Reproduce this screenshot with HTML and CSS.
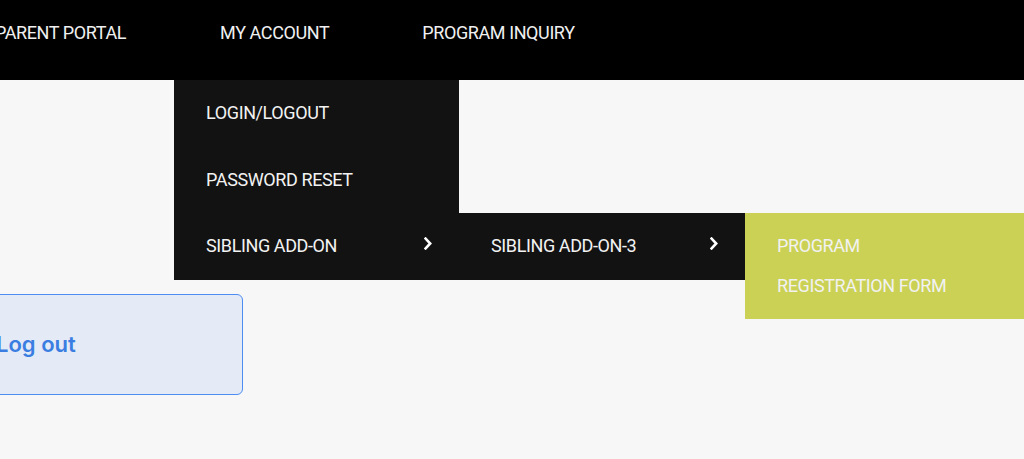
FILE: index.html
```html
<!DOCTYPE html>
<html lang="en">
<head>
<meta charset="utf-8">
<title>Menu</title>
<link rel="stylesheet" href="styles.css">
</head>
<body>
<header class="site-header">
  <nav>
    <ul class="main-nav">
      <li class="nav-item"><a href="#">PARENT PORTAL</a></li>
      <li class="nav-item has-sub">
        <a href="#">MY ACCOUNT</a>
        <ul class="submenu level-1">
          <li class="sub-item"><a href="#">LOGIN/LOGOUT</a></li>
          <li class="sub-item"><a href="#">PASSWORD RESET</a></li>
          <li class="sub-item has-sub">
            <a href="#">SIBLING ADD-ON <svg class="chev" viewBox="0 0 8 13" aria-hidden="true"><path d="M1.6 1.6 L6.2 6.5 L1.6 11.4" fill="none" stroke="#fff" stroke-width="2.6" stroke-linecap="square" stroke-linejoin="miter"/></svg></a>
            <ul class="submenu level-2">
              <li class="sub-item has-sub">
                <a href="#">SIBLING ADD-ON-3 <svg class="chev" viewBox="0 0 8 13" aria-hidden="true"><path d="M1.6 1.6 L6.2 6.5 L1.6 11.4" fill="none" stroke="#fff" stroke-width="2.6" stroke-linecap="square" stroke-linejoin="miter"/></svg></a>
                <ul class="submenu level-3">
                  <li class="sub-item"><a href="#">PROGRAM REGISTRATION FORM</a></li>
                </ul>
              </li>
            </ul>
          </li>
        </ul>
      </li>
      <li class="nav-item"><a href="#">PROGRAM INQUIRY</a></li>
    </ul>
  </nav>
</header>
<main class="content">
  <button class="logout-btn">Log out</button>
</main>
</body>
</html>
```

FILE: styles.css
```css
* { box-sizing: border-box; }
html, body { margin: 0; padding: 0; }
body {
  background: #f7f7f7;
  width: 1024px;
  height: 459px;
  overflow: hidden;
  font-family: Roboto, "Liberation Sans", sans-serif;
}
ul { list-style: none; margin: 0; padding: 0; }
a { text-decoration: none; color: inherit; }

.site-header {
  background: #000;
  height: 80px;
  position: relative;
  z-index: 5;
}
.main-nav {
  display: flex;
  margin-left: -51px;
  height: 80px;
}
.nav-item {
  position: relative;
  padding: 0 47px 0 46px;
  color: #f0f0f0;
  font-size: 18px;
  letter-spacing: -0.4px;
  height: 80px;
}
.nav-item:first-child { padding-right: 48px; }
.nav-item > a { display: block; line-height: 66px; }

.submenu {
  position: absolute;
  width: 286px;
  background: #121212;
}
.level-1 { top: 80px; left: 0; width: 285px; }
.level-2 { top: 0; left: 285px; }
.level-3 { top: 0; left: 286px; background: #cbd155; }

.sub-item { position: relative; }
.sub-item > a {
  display: flex;
  align-items: center;
  justify-content: space-between;
  padding: 13.25px 26px 13.25px 32px;
  line-height: 40px;
  color: #f2f2f2;
  font-size: 18px;
  letter-spacing: -0.4px;
}
.level-3 .sub-item > a {
  display: block;
  padding: 13px 60px 13px 32px;
}
.chev {
  width: 8px;
  height: 13px;
  display: block;
  margin-top: -5px;
  margin-right: 1px;
}

.content {
  position: relative;
}
.logout-btn {
  display: block;
  margin: 214px 0 0 -20px;
  width: 263px;
  height: 101px;
  background: #e4eaf6;
  border: 1.5px solid #4d8cf2;
  border-radius: 6px;
  color: #3b7ee2;
  font-family: Inter, "Open Sans", sans-serif;
  font-weight: 600;
  font-size: 22px;
  text-align: left;
  padding: 0 0 2px 15px;
  letter-spacing: 0;
}
```
